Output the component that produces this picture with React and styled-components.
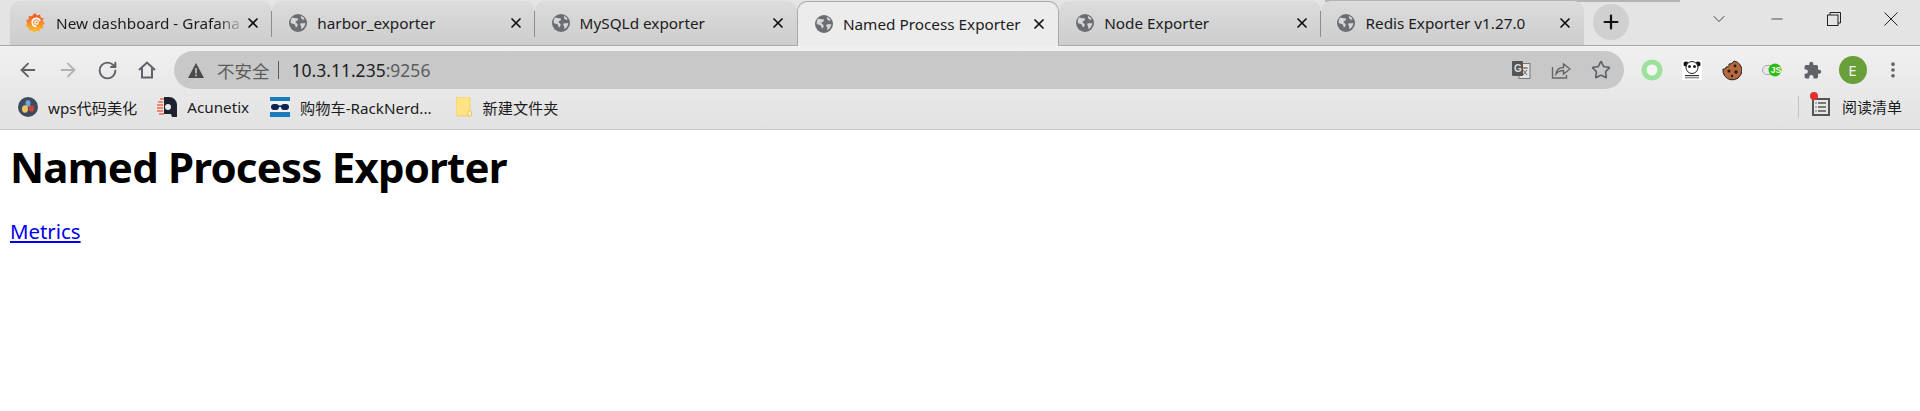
import React from "react";
import styled, { createGlobalStyle } from "styled-components";
import { ArrowLeft, ArrowRight, RotateCw, Star, X, Plus, ChevronDown, Minus, MoreVertical } from "lucide-react";

const Global = createGlobalStyle`
  html, body { margin: 0; padding: 0; background: #fff; }
  body { font-family: "Noto Sans", "Noto Sans CJK SC", sans-serif; }
`;
const Window = styled.div`display: flex; flex-direction: column; min-height: 411px;`;
const Strip = styled.div`
  position: relative; display: flex; align-items: flex-end; height: 45px; padding-left: 10px;
  background: #e4e4e4; border-bottom: 1px solid #a9a9a9; flex: none;
`;
const TopShadow = styled.div`
  position: absolute; left: 1325px; width: 355px; top: 0; height: 2px;
  background: #b4b4b4; filter: blur(0.6px);
`;
const Tab = styled.div`
  position: relative; display: flex; align-items: center; box-sizing: border-box;
  width: 262.3px; height: ${p => (p.$active ? 45 : 44)}px; padding: 0 11px 0 ${p => p.$pad || 17}px;
  margin-bottom: ${p => (p.$active ? -1 : 0)}px;
  border-radius: 10px 10px 0 0; z-index: ${p => (p.$active ? 2 : 1)};
  background: ${p => (p.$active ? "#ececec" : "linear-gradient(#dcdcdc,#cdcdcd)")};
  ${p => p.$active && "border: 1px solid #a9a9a9; border-bottom: none; box-shadow: none;"}
  ${p => p.$sep && `&::after { content: ""; position: absolute; right: 0; top: 10px; width: 1px; height: 26px; background: #8d8d8d; }`}
`;
const TabTitle = styled.span`
  flex: 1; margin-left: 10px; font-size: 15.3px; color: #1c1c1c; white-space: nowrap; overflow: hidden;
  ${p => p.$fade && "-webkit-mask-image: linear-gradient(90deg,#000 85%,transparent);"}
`;
const CloseBtn = styled.span`display: flex; flex: none; color: #111;`;
const NewTab = styled.div`
  display: flex; align-items: center; justify-content: center; width: 36px; height: 36px; border-radius: 50%;
  background: #d0d0d0; margin: 2px 0 4px 9px; color: #111; align-self: center;
`;
const WinControls = styled.div`display: flex; margin-left: auto; align-self: flex-start; height: 38px; color: #222; align-items: center;`;
const WinBtn = styled.span`display: flex; width: 57.4px; justify-content: center;`;
const Chrome = styled.div`background: linear-gradient(#f0f0f0,#e2e2e2); border-bottom: 1px solid #c9c9c9; flex: none;`;
const Toolbar = styled.div`display: flex; align-items: center; height: 48px; padding-left: 16px; box-sizing: border-box;`;
const NavBtn = styled.span`display: flex; width: 24px; justify-content: center; margin-right: 15.5px; color: ${p => p.$off ? "#b2b2b2" : "#5f6368"};`;
const Omnibox = styled.div`
  display: flex; align-items: center; width: 1450px; height: 38px; padding: 0 13px 0 14px; box-sizing: border-box;
  background: #c8c8c8; border-radius: 19px; color: #5a5a5a; font-size: 17.500px;
`;
const Warn = styled.span`display: flex; margin-right: 13px;`;
const Insecure = styled.span`color: #5c5c5c; white-space: nowrap;`;
const Divider = styled.span`width: 1px; height: 18px; background: #5c5c5c; margin: 0 13px 0 8px;`;
const Host = styled.span`color: #222; white-space: nowrap;`;
const Port = styled.span`color: #5c5c5c;`;
const OmniActions = styled.div`display: flex; margin-left: auto; gap: 20px; align-items: center; color: #5f6368;`;
const Extensions = styled.div`display: flex; align-items: center; margin-left: 7.500px;`;
const Ext = styled.span`display: flex; width: 40.2px; justify-content: center; color: #5f6368;`;
const Avatar = styled.span`
  display: flex; align-items: center; justify-content: center; width: 28px; height: 28px; border-radius: 50%;
  background: #689f38; color: #f0f0f0; font-size: 15px;
`;
const Bookmarks = styled.div`display: flex; align-items: center; height: 35px; padding: 0 0 10px 18px; box-sizing: border-box;`;
const Mark = styled.div`display: flex; align-items: center; gap: ${p => p.$inner || 10}px; margin-right: ${p => p.$gap}px; font-size: 15.2px; color: #1b1b1b; white-space: nowrap;`;
const Reading = styled.div`
  display: flex; align-items: center; margin-left: auto; position: relative; margin-right: 18px;
  font-size: 15px; color: #1b1b1b;
`;
const ReadSep = styled.span`width: 1px; height: 22px; background: #c3c3c3; margin-right: 13px;`;
const Dot = styled.span`position: absolute; left: 12px; top: -4px; width: 8px; height: 8px; border-radius: 50%; background: #e12d2d;`;
const ReadLabel = styled.span`margin-left: 12px;`;
const Page = styled.main`padding: 10px; background: #fff; color: #000;`;
const H1 = styled.h1`margin: 0 0 25px; font-size: 42px; line-height: 53px; font-weight: 700; font-family: "Noto Sans", sans-serif; letter-spacing: -.8px;`;
const MetricsLink = styled.a`font-size: 20.400px; line-height: 27px; color: #0000ee; text-decoration: underline; font-family: "Noto Sans", sans-serif;`;

const Globe = () => (
  <svg width="18" height="18" viewBox="0 0 18 18" style={{ flex: "none" }}>
    <circle cx="9" cy="9" r="9" fill="#6a6d72" />
    <path d="M3 3.500c2 .2 3.200 1 5 .8 1-.2 1.300 1 .8 1.800-.6 1-2 .8-2.300 2-.2 1 1.500 1.200 2 2.200.5 1-.4 2.500-1.300 3.200-1-.9-.8-2.200-1.500-3C4.900 9.800 3.200 9.700 1.800 9c-.2-2 .1-4 1.200-5.500zM12 2c1.400.5 3 1.700 3.700 3.500-1 .2-2 .3-2.800-.3-.7-.6-1.200-2-.9-3.200zM11.500 9.500c1-.5 3 0 4.800-.5-.1 2.500-1.600 5-3.800 6.300-.3-1.500 0-2.300-.6-3.300-.5-.8-1-2-.4-2.500z" fill="#d6d6d6" />
  </svg>
);
const Grafana = () => (
  <svg width="20" height="22" viewBox="0 0 20 22" style={{ flex: "none", marginLeft: -1 }}>
    <defs><linearGradient id="gf" x1="0" y1="0" x2="0" y2="1"><stop offset="0" stopColor="#f0502c" /><stop offset="1" stopColor="#fcc52d" /></linearGradient></defs>
    <path d="M9 1l2 2.500 3-1 .7 3 3 .7-.8 3 2 2-2.200 2 .6 3-3 .6-1 2.700-3-.8L8 21l-2-2.500-3 .2-.3-3L0 14l1.300-3L0 8.500 2.700 7l.1-3 3 .3z" fill="url(#gf)" />
    <path d="M10.500 14.500a4 4 0 1 1 3.500-5.500" fill="none" stroke="#fff" strokeWidth="1.700" />
    <circle cx="10.500" cy="10.500" r="1.700" fill="none" stroke="#fff" strokeWidth="1.200" />
  </svg>
);
const tabs = [
  { t: "New dashboard - Grafana", icon: <Grafana />, sep: true, fade: true },
  { t: "harbor_exporter", sep: true },
  { t: "MySQLd exporter" },
  { t: "Named Process Exporter", active: true },
  { t: "Node Exporter", sep: true },
  { t: "Redis Exporter v1.27.0", pad: 16 },
];
const WarnIcon = () => (
  <svg width="16" height="15" viewBox="0 0 16 15"><path d="M8 0l8 15H0z" fill="#4a4a4a" /><rect x="7.200" y="5" width="1.600" height="5.500" fill="#c8c8c8" /><rect x="7.200" y="11.500" width="1.600" height="1.800" fill="#c8c8c8" /></svg>
);
const HomeIcon = () => (
  <svg width="20" height="20" viewBox="0 0 20 20" fill="none" stroke="#5f6368" strokeWidth="2" strokeLinejoin="miter">
    <path d="M2 10l8-7.500L18 10M5 8v9.500h10V8" />
  </svg>
);
const Translate = () => (
  <svg width="20" height="20" viewBox="0 0 20 20">
    <rect x="8" y="3.500" width="11" height="15" fill="#e2e2e2" stroke="#777" />
    <path d="M11 8h6M14 7v2M12 15l4-5M12 10l4 5" stroke="#666" fill="none" />
    <rect x="1" y="1" width="11" height="15" rx="1" fill="#555" />
    <text x="3" y="12" fontSize="10" fontWeight="700" fill="#ddd" fontFamily="Liberation Sans">G</text>
  </svg>
);
const Share = () => (
  <svg width="20" height="20" viewBox="0 0 20 20" fill="none" stroke="#666" strokeWidth="1.400">
    <path d="M1.500 7v11h14v-3" /><path d="M5 14c.5-4 3.500-6.500 7.500-6.500V4l6.500 5-6.500 5v-3.500C9 10.500 7 11.500 5 14z" />
  </svg>
);
const Ring = () => <svg width="22" height="22" viewBox="0 0 22 22"><circle cx="11" cy="11" r="8" fill="#f4f4f4" stroke="#9be29b" strokeWidth="5" /></svg>;
const Panda = () => (
  <svg width="20" height="20" viewBox="0 0 20 20">
    <rect width="20" height="20" fill="#fff" />
    <circle cx="4" cy="4" r="2.500" fill="#111" /><circle cx="16" cy="4" r="2.500" fill="#111" />
    <circle cx="10" cy="7.500" r="6" fill="#fff" stroke="#222" />
    <circle cx="7.500" cy="6.500" r="1.500" fill="#222" /><circle cx="12.500" cy="6.500" r="1.500" fill="#222" />
    <rect x="3" y="15" width="14" height="1.200" fill="#333" /><rect x="3" y="17.300" width="14" height="1" fill="#666" />
  </svg>
);
const Cookie = () => (
  <svg width="20" height="21" viewBox="0 0 20 21">
    <path d="M12 1a9.500 9.500 0 1 1-11 8c2 .5 3-.5 3-2 2 0 3.500-1 3-3 2 0 4-1 5-3z" fill="#b5693c" stroke="#222" strokeWidth="1" />
    <circle cx="13" cy="6" r="1.400" fill="#2a1a12" /><circle cx="7" cy="11" r="1.500" fill="#2a1a12" /><circle cx="14" cy="12" r="1.700" fill="#2a1a12" /><circle cx="10" cy="16" r="1.200" fill="#2a1a12" />
  </svg>
);
const JsToggle = () => (
  <svg width="20" height="14" viewBox="0 0 20 14">
    <rect x=".5" y="2.500" width="16" height="9" rx="4.500" fill="#e8e8e8" stroke="#aaa" />
    <circle cx="13" cy="7" r="6.500" fill="#2ebd0c" />
    <text x="8.700" y="10.300" fontSize="8.500" fontWeight="700" fill="#fff" fontFamily="Liberation Sans">JS</text>
  </svg>
);
const Puzzle = () => (
  <svg width="19" height="19" viewBox="0 0 24 24"><path d="M20.500 11H19V7a2 2 0 0 0-2-2h-4V3.500a2.500 2.500 0 0 0-5 0V5H4a2 2 0 0 0-2 2v3.800h1.500a2.700 2.700 0 0 1 0 5.400H2V20a2 2 0 0 0 2 2h3.800v-1.500a2.700 2.700 0 0 1 5.400 0V22H17a2 2 0 0 0 2-2v-4h1.500a2.500 2.500 0 0 0 0-5z" fill="#5f6368" /></svg>
);
const Restore = () => (
  <svg width="14" height="14" viewBox="0 0 14 14" fill="none" stroke="#222" strokeWidth="1"><rect x=".5" y="3" width="10.500" height="10.500" /><path d="M3 3V.5h10.500V11H11" /></svg>
);
const ThinX = () => (
  <svg width="14" height="14" viewBox="0 0 14 14" stroke="#222" strokeWidth="1"><path d="M.5.500l13 13M13.500.500l-13 13" /></svg>
);
const MarkWps = () => (
  <svg width="20" height="20" viewBox="0 0 20 20">
    <circle cx="10" cy="10" r="10" fill="#3f4a5e" />
    <ellipse cx="10" cy="6.500" rx="2.500" ry="3.500" fill="#6aa5dc" />
    <ellipse cx="7" cy="12" rx="3" ry="3.700" fill="#f0c75a" />
    <ellipse cx="13.500" cy="11.500" rx="2.700" ry="3.200" fill="#c9413b" />
  </svg>
);
const MarkAcu = () => (
  <svg width="20" height="20" viewBox="0 0 20 20">
    <path d="M7 0h5a8 8 0 0 1 8 8v12h-5l-1-3H7z" fill="#1d2230" />
    <circle cx="11" cy="10" r="3" fill="#e8e8e8" />
    <path d="M1 5h5M0 8h6M0 11h6M0 14h6M2 17h5M3 2h4" stroke="#ee6a4c" strokeWidth="1.600" />
  </svg>
);
const MarkCart = () => (
  <svg width="20" height="20" viewBox="0 0 20 20">
    <rect width="20" height="20" fill="#f1f1f1" />
    <rect y="0" width="20" height="4" fill="#1a7bbf" /><rect y="15" width="20" height="5" fill="#1a7bbf" />
    <rect x="1" y="7" width="8" height="6" rx="3" fill="#0e2350" /><rect x="11" y="7" width="8" height="6" rx="3" fill="#0e2350" />
    <rect x="8" y="8.500" width="4" height="1.500" fill="#0e2350" />
  </svg>
);
const MarkFolder = () => (
  <svg width="16" height="20" viewBox="0 0 16 20">
    <path d="M1.500 0h11A1.500 1.500 0 0 1 14 1.500V19H1.500A1.500 1.500 0 0 1 0 17.500v-16A1.500 1.500 0 0 1 1.500 0z" fill="#ffe385" stroke="#e9cf6c" />
    <rect x="12" y="14" width="3.500" height="5" rx="1" fill="#fff3c0" stroke="#e3c45c" />
  </svg>
);
const ListIcon = () => (
  <svg width="18" height="18" viewBox="0 0 18 18" fill="none" stroke="#555"><rect x="1" y="1" width="16" height="16" strokeWidth="2" /><path d="M6 5h8M6 9h8M6 13h8" strokeWidth="1.500" /><path d="M3.500 5h1M3.500 9h1M3.500 13h1" strokeWidth="1.500" /></svg>
);

export default function App() {
  return (
    <Window>
      <Global />
      <Strip>
        <TopShadow />
        {tabs.map(x => (
          <Tab key={x.t} $active={x.active} $sep={x.sep} $pad={x.pad}>
            {x.icon || <Globe />}
            <TabTitle $fade={x.fade}>{x.t}</TabTitle>
            <CloseBtn><X size={16} strokeWidth={2.6} /></CloseBtn>
          </Tab>
        ))}
        <NewTab><Plus size={22} strokeWidth={2.4} /></NewTab>
        <WinControls>
          <WinBtn><ChevronDown size={20} strokeWidth={1} /></WinBtn>
          <WinBtn><Minus size={18} strokeWidth={1} /></WinBtn>
          <WinBtn><Restore /></WinBtn>
          <WinBtn><ThinX /></WinBtn>
        </WinControls>
      </Strip>
      <Chrome>
        <Toolbar>
          <NavBtn><ArrowLeft size={22} strokeWidth={2} /></NavBtn>
          <NavBtn $off><ArrowRight size={22} strokeWidth={2} /></NavBtn>
          <NavBtn><RotateCw size={21} strokeWidth={2.2} /></NavBtn>
          <NavBtn><HomeIcon /></NavBtn>
          <Omnibox>
            <Warn><WarnIcon /></Warn>
            <Insecure>不安全</Insecure>
            <Divider />
            <Host>10.3.11.235<Port>:9256</Port></Host>
            <OmniActions>
              <Translate />
              <Share />
              <Star size={20} strokeWidth={2} />
            </OmniActions>
          </Omnibox>
          <Extensions>
            <Ext><Ring /></Ext>
            <Ext><Panda /></Ext>
            <Ext><Cookie /></Ext>
            <Ext><JsToggle /></Ext>
            <Ext><Puzzle /></Ext>
            <Ext><Avatar>E</Avatar></Ext>
            <Ext><MoreVertical size={20} strokeWidth={2.4} /></Ext>
          </Extensions>
        </Toolbar>
        <Bookmarks>
          <Mark $gap={20}><MarkWps />wps代码美化</Mark>
          <Mark $gap={21}><MarkAcu />Acunetix</Mark>
          <Mark $gap={24}><MarkCart />购物车-RackNerd...</Mark>
          <Mark $gap={0} $inner={11}><MarkFolder />新建文件夹</Mark>
          <Reading>
            <ReadSep />
            <Dot />
            <ListIcon />
            <ReadLabel>阅读清单</ReadLabel>
          </Reading>
        </Bookmarks>
      </Chrome>
      <Page>
        <H1>Named Process Exporter</H1>
        <MetricsLink href="#">Metrics</MetricsLink>
      </Page>
    </Window>
  );
}
